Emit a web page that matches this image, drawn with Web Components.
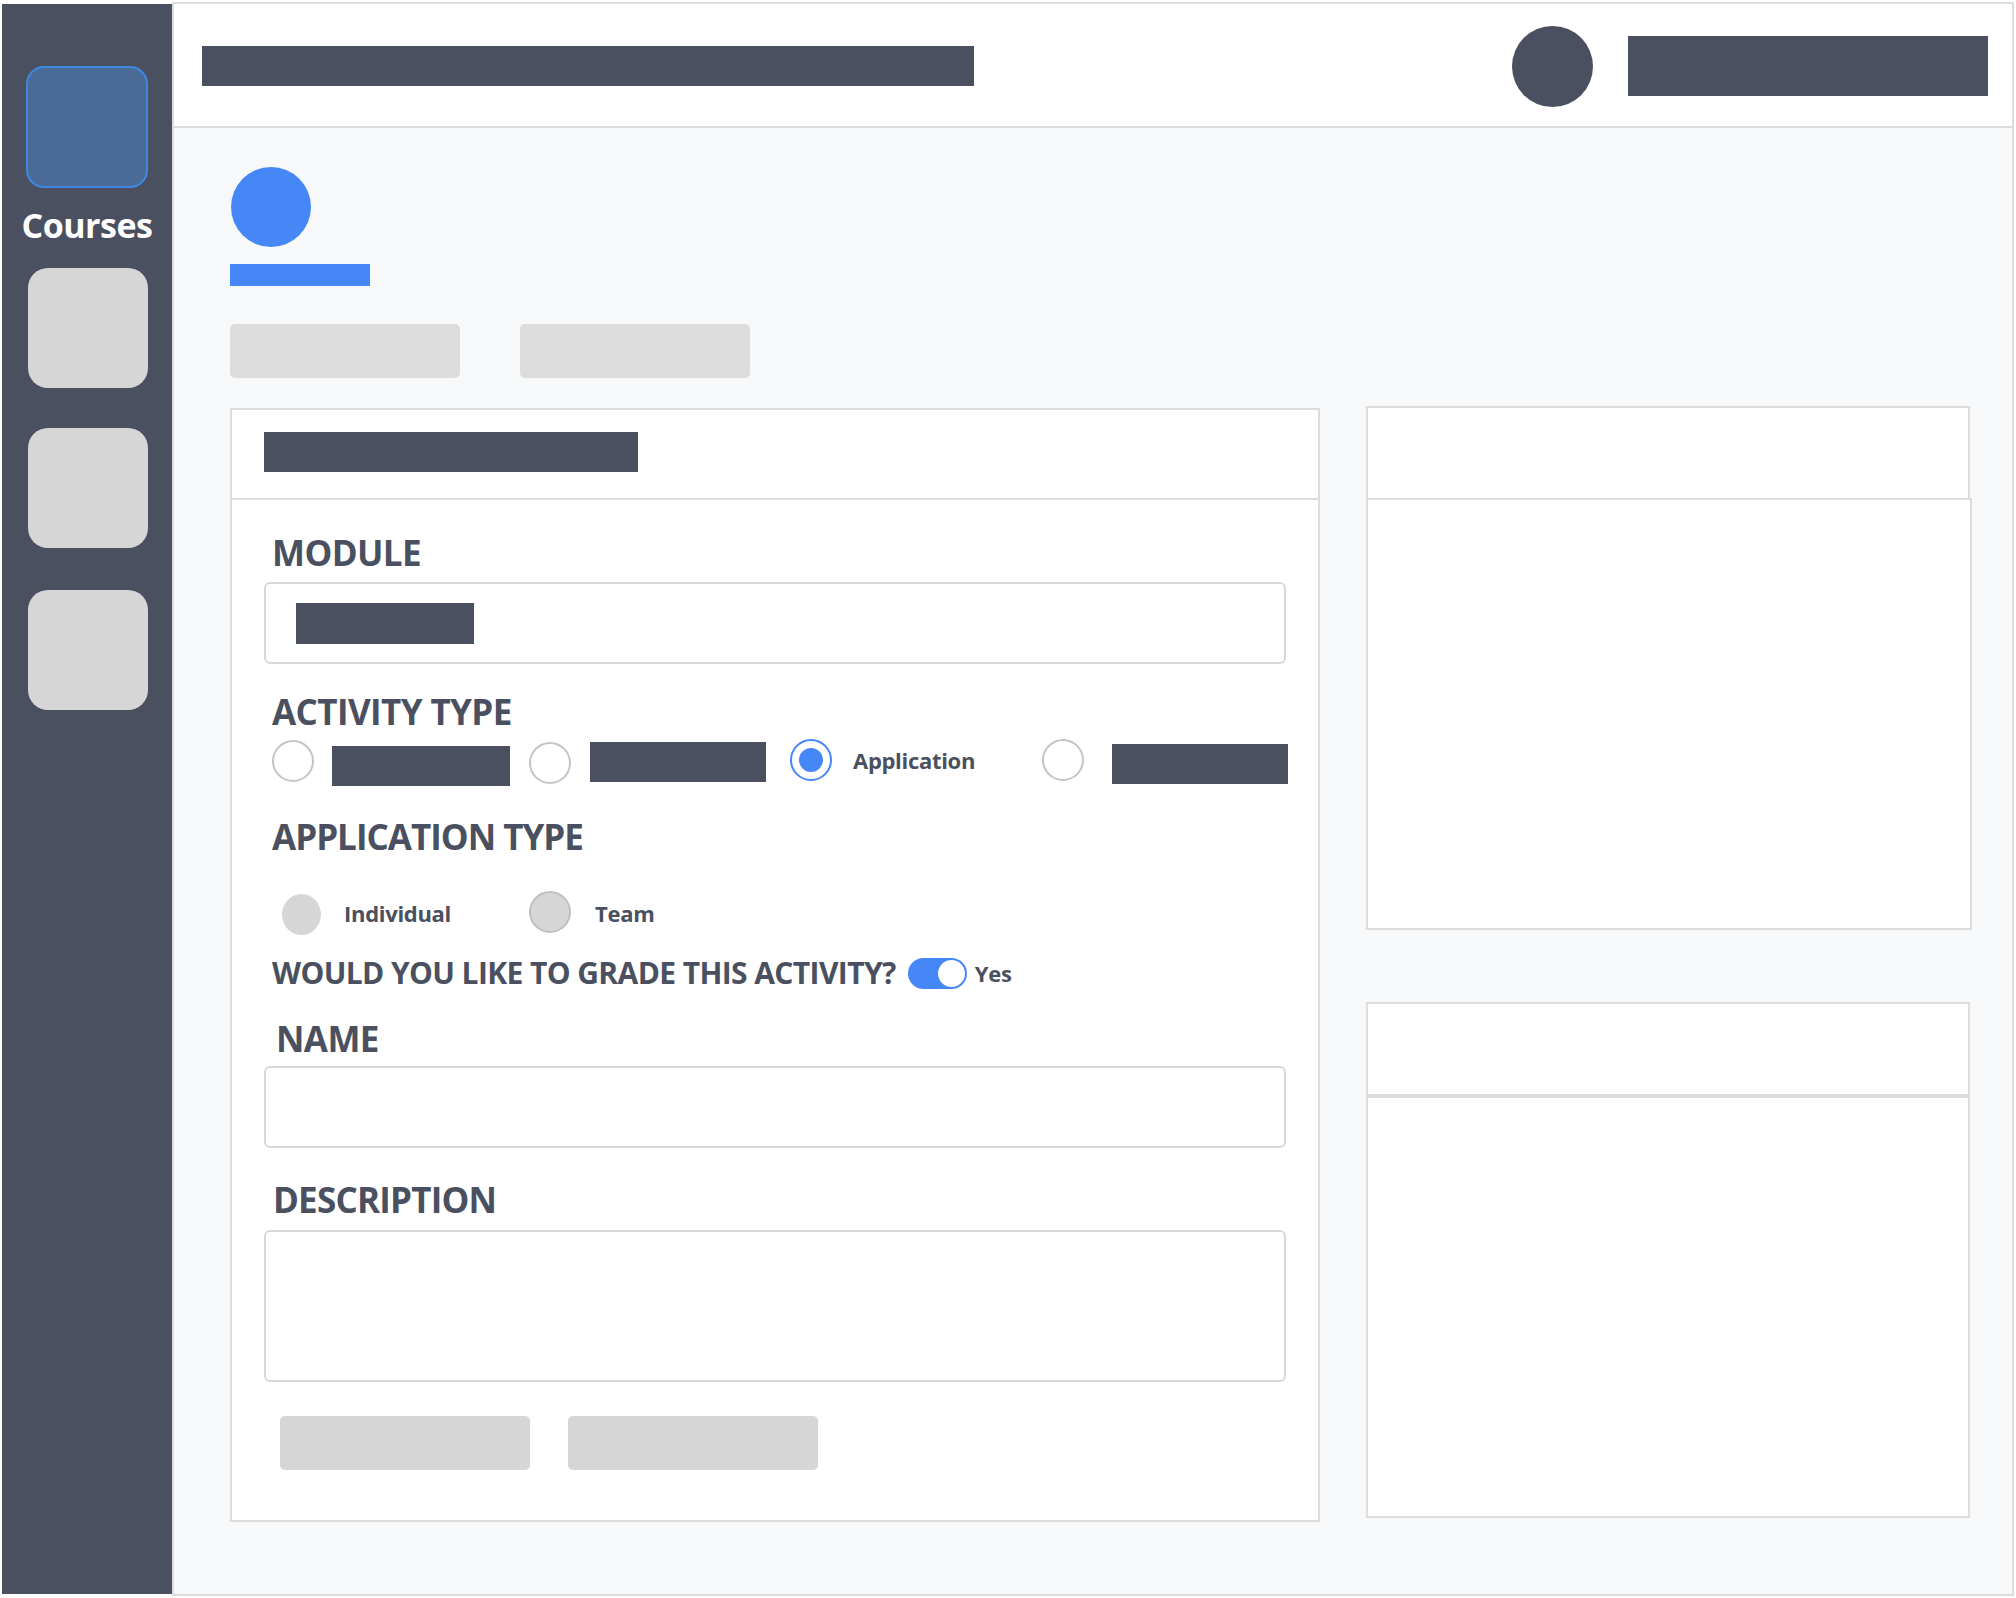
<!DOCTYPE html>
<html>
<head>
<meta charset="utf-8">
<title>Courses</title>
<style>
html, body { margin: 0; padding: 0; background: #fff; }
body { font-family: "Open Sans", "Liberation Sans", sans-serif; color: #4a5060; }
</style>
</head>
<body>
<app-shell>
  <app-sidebar slot="side"></app-sidebar>
  <app-header slot="top"></app-header>
  <course-heading></course-heading>
  <div style="display:flex;align-items:flex-start">
    <activity-form></activity-form>
    <div style="margin-left:46px;width:606px">
      <side-panel body-height="432" header-height="92" head-width="604" body-width="606"></side-panel>
      <side-panel body-height="424" header-height="92" head-width="604" body-width="604" thick style="margin-top:72px"></side-panel>
    </div>
  </div>
</app-shell>

<script>
// small helper so every element below only has to write its markup
class Base extends HTMLElement {
  constructor() {
    super();
    this.attachShadow({ mode: "open" });
  }
  connectedCallback() {
    if (!this.shadowRoot.innerHTML) this.shadowRoot.innerHTML = this.render();
  }
}

class AppShell extends Base {
  render() {
    return `<style>
      :host { display: block; width: 2016px; height: 1598px; box-sizing: border-box; padding: 2px 0 0 2px; overflow: hidden; }
      .wrap { display: flex; align-items: flex-start; height: 1594px; }
      .side { width: 170px; height: 1590px; margin-top: 2px; flex: none; display: flex; }
      .main { width: 1842px; height: 1594px; box-sizing: border-box; flex: none; background: #f7f8fa;
        border: 2px solid #dcdcdc; }
      .content { padding: 0 0 0 56px; }
    </style>
    <div class="wrap">
      <div class="side"><slot name="side"></slot></div>
      <div class="main">
        <slot name="top"></slot>
        <div class="content"><slot></slot></div>
      </div>
    </div>`;
  }
}

class RedactBar extends Base {
  render() {
    const w = this.getAttribute("w"), h = this.getAttribute("h");
    const c = this.getAttribute("color") || "#4a5060";
    return `<style>
      :host { display: block; flex: none; width: ${w}px; height: ${h}px; background: ${c}; }
    </style>`;
  }
}

class AppSidebar extends Base {
  render() {
    return `<style>
      :host { display: flex; flex-direction: column; width: 170px; background: #4a5060; box-sizing: border-box; padding: 62px 0 0 24px; }
      .active { width: 122px; height: 122px; box-sizing: border-box; background: #4a6b98; border: 2px solid #3f87e0; border-radius: 18px; }
      .label { width: 170px; margin: 17px 0 23px -24px; text-align: center; color: #fff; font: 700 34px/40px "Open Sans", sans-serif; letter-spacing: -0.5px; }
      .tile { width: 120px; height: 120px; margin-left: 2px; background: #d6d6d6; border-radius: 20px; }
      .tile + .tile { margin-top: 40px; }
      .tile:last-child { margin-top: 42px; }
    </style>
    <div class="active"></div>
    <div class="label">Courses</div>
    <div class="tile"></div>
    <div class="tile"></div>
    <div class="tile"></div>`;
  }
}

class AppHeader extends Base {
  render() {
    return `<style>
      :host { display: flex; align-items: center; height: 120px; background: #fff; border-bottom: 2px solid #dcdcdc; padding: 2px 24px 0 28px; }
      .dot { width: 81px; height: 81px; border-radius: 50%; background: #4a5060; margin: 0 35px 0 auto; }
    </style>
    <redact-bar w="772" h="40"></redact-bar>
    <div class="dot"></div>
    <redact-bar w="360" h="60"></redact-bar>`;
  }
}

class CourseHeading extends Base {
  render() {
    return `<style>
      :host { display: block; padding-top: 39px; }
      .dot { width: 80px; height: 80px; margin: 0 0 17px 1px; border-radius: 50%; background: #4687f8; }
      .tabs { display: flex; gap: 60px; margin: 38px 0 28px; }
      .tab { width: 230px; height: 54px; border-radius: 5px; background: #dcdcdc; }
    </style>
    <div class="dot"></div>
    <redact-bar w="140" h="22" color="#4687f8"></redact-bar>
    <div class="tabs"><div class="tab"></div><div class="tab"></div></div>`;
  }
}

class FormRadio extends Base {
  render() {
    const kind = this.getAttribute("kind") || "empty";
    const styles = {
      empty: "background:#fff;border:2px solid #c4c4c4",
      checked: "background:#fff;border:2px solid #4687f8",
      grey: "background:#d6d6d6",
      greyring: "background:#d6d6d6;border:2px solid #c0c0c0",
    };
    return `<style>
      :host { display: flex; flex: none; align-items: center; justify-content: center; width: 42px; height: 42px; box-sizing: border-box; border-radius: 50%; ${styles[kind]}; }
      .in { width: 24px; height: 24px; border-radius: 50%; background: #4687f8; }
    </style>${kind === "checked" ? '<div class="in"></div>' : ""}`;
  }
}

class FormLabel extends Base {
  render() {
    const size = this.getAttribute("size") || 35;
    const ls = this.getAttribute("ls") || -0.6;
    return `<style>
      :host { display: block; flex: none; height: 40px; font: 700 ${size}px/40px "Open Sans", sans-serif; letter-spacing: ${ls}px; color: #4a5060; white-space: nowrap; }
    </style><slot></slot>`;
  }
}

class FormOption extends Base {
  render() {
    return `<style>
      :host { display: block; flex: none; height: 40px; font: 700 22px/40px "Open Sans", sans-serif; letter-spacing: -0.3px; color: #4a5060; white-space: nowrap; }
    </style><slot></slot>`;
  }
}

class TextBox extends Base {
  render() {
    return `<style>
      :host { display: block; width: 1022px; box-sizing: border-box; height: ${this.getAttribute("h")}px; background: #fff;
        border: 2px solid #d8d8d8; border-radius: 6px; padding: 19px 0 0 30px; }
    </style><slot></slot>`;
  }
}

class ToggleSwitch extends Base {
  render() {
    return `<style>
      :host { display: flex; flex: none; justify-content: flex-end; align-items: center; width: 59px; height: 31px; box-sizing: border-box; background: #4687f8; border-radius: 16px; padding-right: 2px; }
      .knob { width: 27px; height: 27px; border-radius: 50%; background: #fff; }
    </style><div class="knob"></div>`;
  }
}

class ActivityForm extends Base {
  render() {
    return `<style>
      :host { display: block; flex: none; width: 1090px; height: 1114px; box-sizing: border-box; background: #fff; border: 2px solid #dcdcdc; margin-top: 2px; }
      .head { height: 90px; box-sizing: border-box; border-bottom: 2px solid #dcdcdc; padding: 22px 0 0 32px; }
      .body { padding: 33px 0 0 32px; }
      .row { display: flex; align-items: flex-start; }
      form-label.lead { margin-left: 8px; }
      .btn { width: 250px; height: 54px; border-radius: 5px; background: #d6d6d6; }
    </style>
    <div class="head"><redact-bar w="374" h="40"></redact-bar></div>
    <div class="body">
      <form-label class="lead">MODULE</form-label>
      <text-box h="82" style="margin-top:9px"><redact-bar w="178" h="41"></redact-bar></text-box>

      <form-label class="lead" style="margin-top:28px">ACTIVITY TYPE</form-label>
      <div class="row" style="margin-top:7px;height:47px">
        <form-radio style="margin:1px 0 0 8px"></form-radio>
        <redact-bar w="178" h="40" style="margin:7px 0 0 18px"></redact-bar>
        <form-radio style="margin:3px 0 0 19px"></form-radio>
        <redact-bar w="176" h="40" style="margin:3px 0 0 19px"></redact-bar>
        <form-radio kind="checked" style="margin-left:24px"></form-radio>
        <form-option style="margin:1px 0 0 21px;width:123px">Application</form-option>
        <form-radio style="margin-left:66px"></form-radio>
        <redact-bar w="176" h="40" style="margin:5px 0 0 28px"></redact-bar>
      </div>

      <form-label class="lead" ls="-1" style="margin-top:31px">APPLICATION TYPE</form-label>
      <div class="row" style="margin-top:34px;height:44px">
        <form-radio kind="grey" style="margin:3px 0 0 18px;width:39px;height:41px"></form-radio>
        <form-option style="margin:2px 0 0 23px;width:107px">Individual</form-option>
        <form-radio kind="greyring" style="margin-left:78px"></form-radio>
        <form-option style="margin:2px 0 0 24px">Team</form-option>
      </div>

      <div class="row" style="margin:18px 0 0 8px;align-items:center;height:40px">
        <form-label size="30">WOULD YOU LIKE TO GRADE THIS ACTIVITY?</form-label>
        <toggle-switch style="margin-left:12px"></toggle-switch>
        <form-option style="margin-left:8px">Yes</form-option>
      </div>

      <form-label style="margin:26px 0 0 12px">NAME</form-label>
      <text-box h="82" style="margin-top:7px"></text-box>

      <form-label ls="-0.8" style="margin:32px 0 0 9px">DESCRIPTION</form-label>
      <text-box h="152" style="margin-top:10px"></text-box>

      <div class="row" style="margin:34px 0 0 16px;gap:38px">
        <div class="btn"></div><div class="btn"></div>
      </div>
    </div>`;
  }
}

class SidePanel extends Base {
  render() {
    const hh = this.getAttribute("header-height"), bh = this.getAttribute("body-height");
    const hw = this.getAttribute("head-width"), bw = this.getAttribute("body-width");
    const line = this.hasAttribute("thick") ? 4 : 2;
    return `<style>
      :host { display: block; }
      .head { width: ${hw}px; height: ${hh}px; box-sizing: border-box; background: #fff; border: 2px solid #dcdcdc; border-bottom: 0; }
      .body { width: ${bw}px; height: ${bh}px; box-sizing: border-box; background: #fff; border: 2px solid #dcdcdc; border-top-width: ${line}px; }
    </style><div class="head"></div><div class="body"></div>`;
  }
}

customElements.define("app-shell", AppShell);
customElements.define("redact-bar", RedactBar);
customElements.define("app-sidebar", AppSidebar);
customElements.define("app-header", AppHeader);
customElements.define("course-heading", CourseHeading);
customElements.define("form-radio", FormRadio);
customElements.define("form-label", FormLabel);
customElements.define("form-option", FormOption);
customElements.define("text-box", TextBox);
customElements.define("toggle-switch", ToggleSwitch);
customElements.define("activity-form", ActivityForm);
customElements.define("side-panel", SidePanel);
</script>
</body>
</html>
